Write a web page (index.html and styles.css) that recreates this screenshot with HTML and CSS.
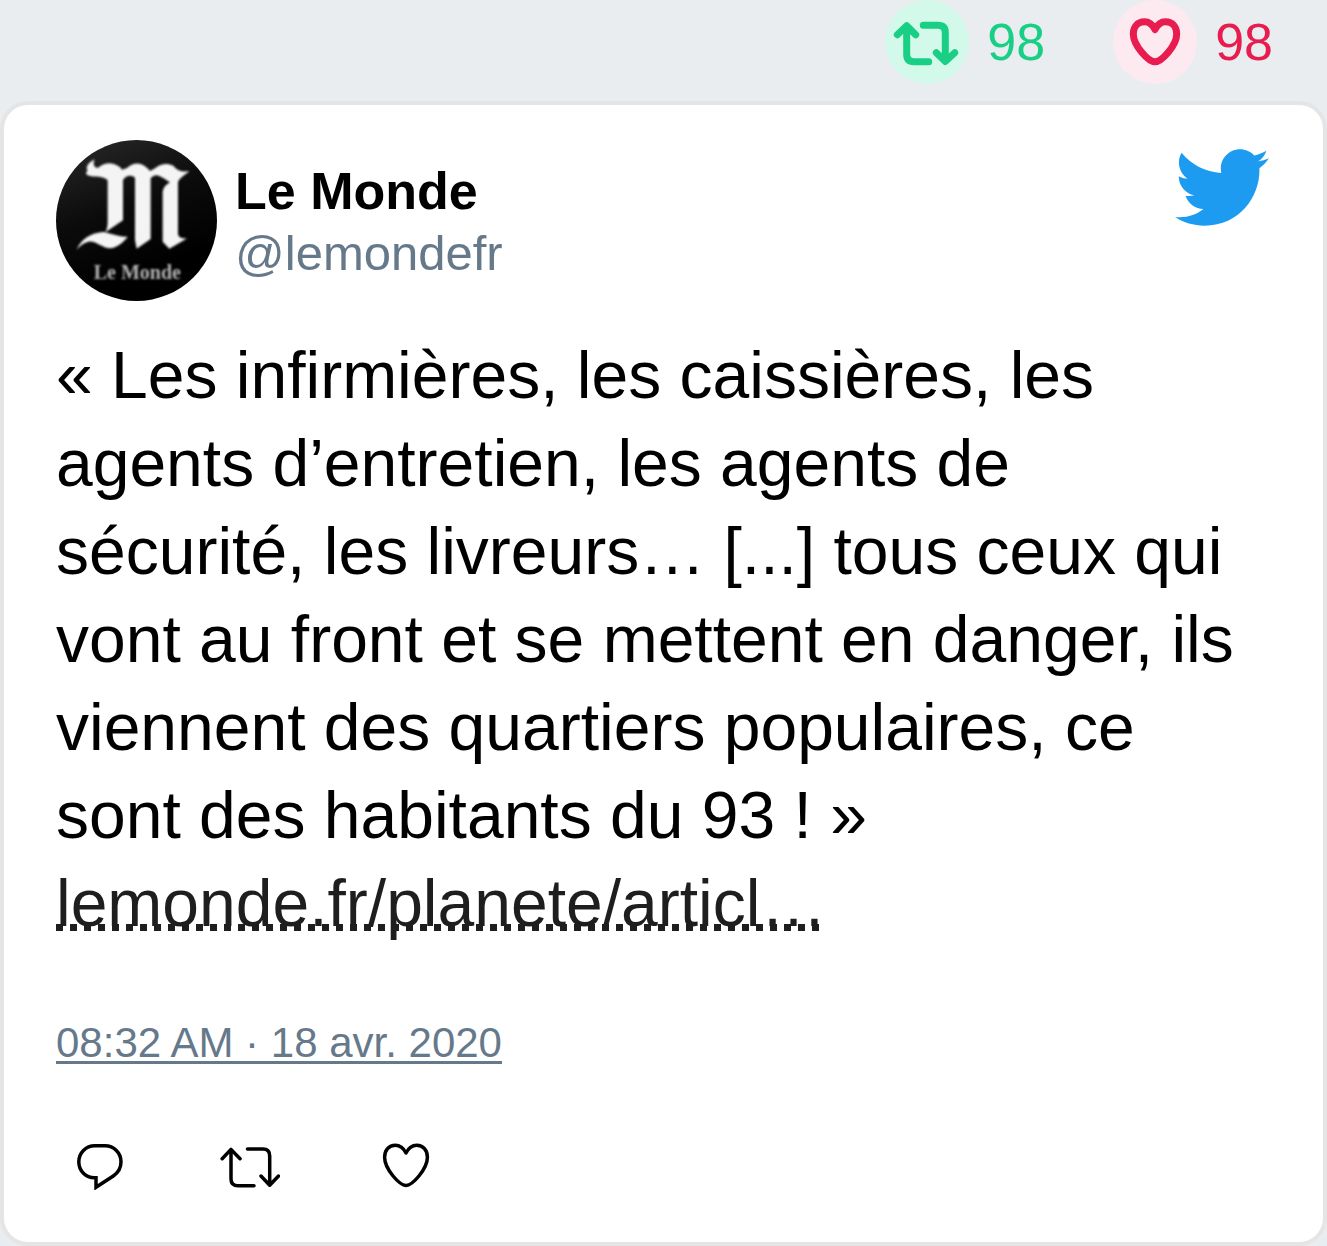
FILE: index.html
```html
<!DOCTYPE html>
<html lang="fr">
<head>
<meta charset="utf-8">
<meta name="viewport" content="width=device-width, initial-scale=1">
<title>Le Monde (@lemondefr)</title>
<link rel="stylesheet" href="styles.css">
</head>
<body>
<div class="stats">
  <button class="stat stat-retweet" type="button" aria-label="98 retweets">
    <svg class="stat-icon" viewBox="0 0 84 84" aria-hidden="true">
      <path d="M12.3 34.7 21.7 25.7 30.7 34.7M21.7 26V54.5Q21.7 61.7 29 61.7H43.7M38.3 25.3H53Q60.3 25.3 60.3 32.5V61M51.3 52.7 60.3 61.5 69.7 52.7"/>
    </svg>
    <span>98</span>
  </button>
  <button class="stat stat-like" type="button" aria-label="98 j’aime">
    <svg class="stat-icon" viewBox="0 0 84 84" aria-hidden="true">
      <path d="M42 29.5C39.5 24.5 36 21.8 31.5 21.8 24.5 21.8 20.3 27 20.3 34 20.3 45.5 35.5 61.8 42 61.8S63.7 45.5 63.7 34C63.7 27 59.5 21.8 52.5 21.8 48 21.8 44.5 24.5 42 29.5z"/>
    </svg>
    <span>98</span>
  </button>
</div>

<article class="card">
  <header class="author">
    <svg class="avatar" viewBox="48 45 483 483" role="img" aria-label="Logo du journal">
      <defs>
        <linearGradient id="shade" x1="0.3" y1="0" x2="0.6" y2="0.8">
          <stop offset="0" stop-color="#242424"/>
          <stop offset="0.5" stop-color="#0b0b0b"/>
          <stop offset="1" stop-color="#000"/>
        </linearGradient>
        <filter id="soft"><feGaussianBlur stdDeviation="2.5"/></filter>
      </defs>
      <rect x="48" y="45" width="483" height="483" fill="url(#shade)"/>
      <g fill="#f4f4f4" filter="url(#soft)">
        <path d="M164 103C142 114 136 128 143 138 136 142 136 150 148 152 168 158 188 150 203 166V290C203 304 201 312 196 322L249 286V166C256 152 272 148 285 158V345L290 371 332 342V160C340 150 350 149 358 153 370 158 380 166 390 172 376 180 368 190 368 204V350L388 371 442 340C428 342 416 338 414 328V174C414 162 430 154 448 138 430 142 412 138 400 122 380 114 364 116 345 130L330 138C312 116 288 106 262 128L247 134C228 112 200 108 174 128 162 130 158 116 164 103z"/>
        <path d="M110 374C122 345 150 324 188 321 208 322 238 338 263 335 252 350 232 368 210 370 186 370 170 347 145 350 130 354 120 362 110 374z"/>
        <text class="avatar-caption" x="292" y="463" text-anchor="middle">Le Monde</text>
      </g>
    </svg>
    <div class="names">
      <span class="name">Le Monde</span>
      <a class="handle" href="#">@lemondefr</a>
    </div>
    <svg class="bird" viewBox="0.937 2.752 22.706 18.453" role="img" aria-label="Twitter">
      <path d="M23.643 4.937c-.835.37-1.732.62-2.675.733.962-.576 1.7-1.49 2.048-2.578-.9.534-1.897.922-2.958 1.13-.85-.904-2.06-1.47-3.4-1.47-2.572 0-4.658 2.086-4.658 4.66 0 .364.042.718.12 1.06-3.873-.195-7.304-2.05-9.602-4.868-.4.69-.63 1.49-.63 2.342 0 1.616.823 3.043 2.072 3.878-.764-.025-1.482-.234-2.11-.583v.06c0 2.257 1.605 4.14 3.737 4.568-.392.106-.803.162-1.227.162-.3 0-.593-.028-.877-.082.593 1.85 2.313 3.198 4.352 3.234-1.595 1.25-3.604 1.995-5.786 1.995-.376 0-.747-.022-1.112-.065 2.062 1.323 4.51 2.093 7.14 2.093 8.57 0 13.255-7.098 13.255-13.254 0-.2-.005-.402-.014-.602.91-.658 1.7-1.477 2.323-2.41z"/>
    </svg>
  </header>

  <p class="message">« Les infirmières, les caissières, les agents d’entretien, les agents de sécurité, les livreurs… [...] tous ceux qui vont au front et se mettent en danger, ils viennent des quartiers populaires, ce sont des habitants du 93 ! » <a class="article-link" href="#">lemonde.fr/planete/articl…</a></p>

  <a class="date" href="#">08:32 AM · 18 avr. 2020</a>

  <div class="actions">
    <button class="action" type="button" aria-label="Répondre">
      <svg width="48" height="48" viewBox="0 -1 48 48" aria-hidden="true">
        <path stroke-linejoin="miter" d="M18.5 34.7C9.8 34.7 2.8 28 2.8 18.8 2.8 9.8 9.8 2.8 18.8 2.8H29C38 2.8 45 9.8 45 18.8 45 24.8 42 29.8 37.3 33L20 44.3V34.7z"/>
      </svg>
    </button>
    <button class="action" type="button" aria-label="Retweeter">
      <svg width="60" height="48" viewBox="0 -3 60 48" aria-hidden="true">
        <path d="M2.2 13.7 11 4.4 20 13.7M11 5V34Q11 40.7 18 40.7H34M27.5 4H43Q49.7 4 49.7 11V40M41 31 49.7 40.2 58.5 31"/>
      </svg>
    </button>
    <button class="action" type="button" aria-label="J’aime">
      <svg width="60" height="48" viewBox="0 1 60 48" aria-hidden="true">
        <path d="M30 12C27.5 7 23.7 4.2 19.3 4.2 12.8 4.2 8.6 9.5 8.6 16.3 8.6 28 23.5 44.4 30 44.4S51.4 28 51.4 16.3C51.4 9.5 47.2 4.2 40.7 4.2 36.3 4.2 32.5 7 30 12z"/>
      </svg>
    </button>
  </div>
</article>
</body>
</html>
```
FILE: styles.css
```css
* {
  box-sizing: border-box;
}

body {
  margin: 0;
  background: #e9edf0;
  color: #000;
  font-family: "Liberation Sans", Arial, Helvetica, sans-serif;
}

button {
  padding: 0;
  border: 0;
  background: none;
  color: inherit;
  font: inherit;
  cursor: pointer;
}

svg {
  display: block;
  flex: none;
}

/* Retweet and like counters above the card */
.stats {
  display: flex;
  justify-content: flex-end;
  gap: 68px;
  padding-right: 54px;
  margin-bottom: 17px;
}

.stat {
  display: flex;
  align-items: center;
  gap: 18px;
  font-size: 52px;
  line-height: 60px;
}

.stat-icon {
  width: 84px;
  height: 84px;
  border-radius: 50%;
  fill: none;
  stroke: currentColor;
  stroke-width: 7;
  stroke-linecap: round;
  stroke-linejoin: round;
}

.stat-retweet {
  color: #19cf86;
}

.stat-retweet .stat-icon {
  background: #d3f9ea;
}

.stat-like {
  color: #e81c4f;
}

.stat-like .stat-icon {
  background: #fdeaf1;
}

/* Tweet card */
.card {
  padding: 35px 54px 52px 52px;
  border: 4px solid #e5e5e5;
  border-radius: 28px;
  background: #fff;
}

.author {
  display: flex;
  align-items: center;
  gap: 18px;
}

.avatar {
  width: 161px;
  height: 161px;
  border-radius: 50%;
}

.avatar-caption {
  font-family: "Liberation Serif", "Times New Roman", serif;
  font-size: 60px;
  font-weight: 700;
  fill: #b4b4b4;
}

.names {
  display: flex;
  flex: 1;
  flex-direction: column;
  padding-top: 2px;
}

.name {
  font-size: 52px;
  font-weight: 700;
  line-height: 62px;
}

.handle {
  color: #66798a;
  font-size: 49px;
  line-height: 62px;
  text-decoration: none;
}

.bird {
  align-self: flex-start;
  width: 94px;
  height: 77px;
  margin-top: 9px;
  fill: #1d9bf0;
}

.message {
  margin: 30px 0 68px;
  font-size: 66px;
  line-height: 88px;
}

.article-link {
  display: inline-block;
  background: repeating-linear-gradient(90deg, #1e1e1e 0 7px, transparent 7px 14px) 0 65px / 100% 7px no-repeat;
  color: #1e1e1e;
  text-decoration: none;
}

.date {
  display: inline-block;
  color: #66798a;
  font-size: 42px;
  line-height: 56px;
  text-decoration: underline;
  text-decoration-thickness: 3px;
  text-underline-offset: 4px;
  text-decoration-skip-ink: none;
}

.actions {
  display: flex;
  gap: 96px;
  margin-top: 71px;
  padding-left: 20px;
}

.action svg {
  fill: none;
  stroke: currentColor;
  stroke-width: 3.5;
  stroke-linecap: round;
  stroke-linejoin: round;
}
```
